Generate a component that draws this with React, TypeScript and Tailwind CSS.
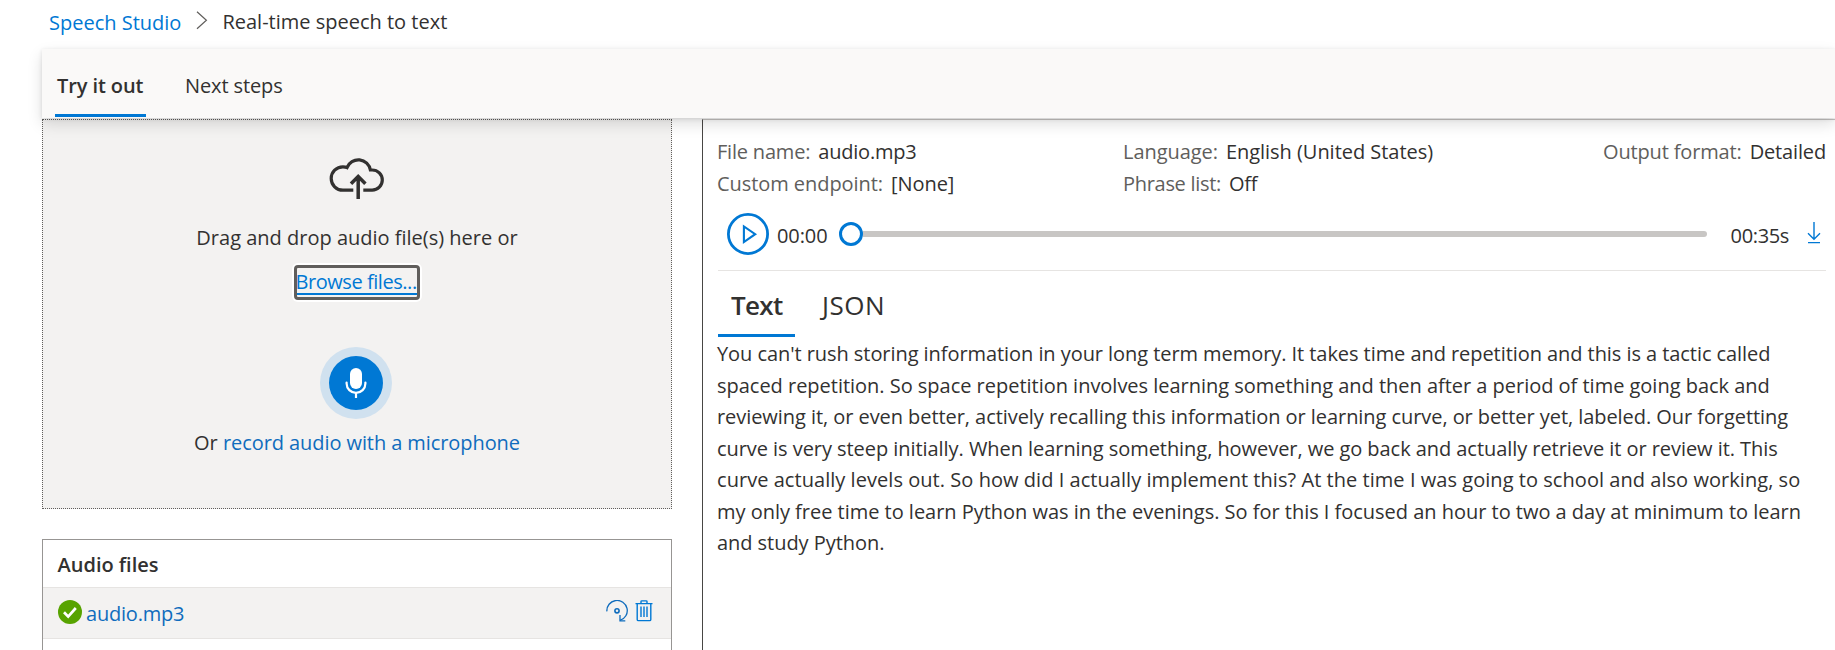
const transcript: { text: string; tracking: string }[] = [
  { text: "You can't rush storing information in your long term memory. It takes time and repetition and this is a tactic called", tracking: "tracking-[-0.062px]" },
  { text: "spaced repetition. So space repetition involves learning something and then after a period of time going back and", tracking: "tracking-[-0.02px]" },
  { text: "reviewing it, or even better, actively recalling this information or learning curve, or better yet, labeled. Our forgetting", tracking: "tracking-[-0.06px]" },
  { text: "curve is very steep initially. When learning something, however, we go back and actually retrieve it or review it. This", tracking: "tracking-[-0.055px]" },
  { text: "curve actually levels out. So how did I actually implement this? At the time I was going to school and also working, so", tracking: "tracking-[0.045px]" },
  { text: "my only free time to learn Python was in the evenings. So for this I focused an hour to two a day at minimum to learn", tracking: "tracking-[-0.022px]" },
  { text: "and study Python.", tracking: "tracking-[-0.05px]" },
];

function Field({ label, value, labelClass, valueClass }: { label: string; value: string; labelClass: string; valueClass: string }) {
  return (
    <div className="flex gap-[8px]">
      <span className={`text-[#605e5c] ${labelClass}`}>{label}</span>
      <span className={valueClass}>{value}</span>
    </div>
  );
}

function CloudUploadIcon() {
  return (
    <svg width="64" height="56" viewBox="0 0 64 56" fill="none" stroke="#323130" strokeWidth="3.2">
      <path d="M28.3 40.2H17.9A11.7 11.7 0 0 1 17.9 16.8C19.5 16.8 20.8 17 22 17.6A12.2 12.2 0 0 1 45.4 20H47.2A10.1 10.1 0 0 1 47.2 40.2H38.3" />
      <path d="M33.2 49V26.5M26 33.8L33.2 26.5L40.4 33.8" strokeWidth="3.5" />
    </svg>
  );
}

function MicIcon() {
  return (
    <svg width="24" height="32" viewBox="0 0 24 32" fill="none" stroke="white" strokeWidth="2.2">
      <rect x="6" y="1" width="12" height="21" rx="6" fill="white" stroke="none" />
      <path d="M2.6 15.5V16.5A9.4 9.4 0 0 0 21.4 16.5V15.5" strokeLinecap="round" />
      <path d="M12 25.5V31" />
    </svg>
  );
}

function RedoIcon() {
  return (
    <svg width="22" height="22" viewBox="0 0 22 22" fill="none" stroke="#0f6cbd" strokeWidth="1.3">
      <path d="M0.9 11.4A10.2 10.2 0 1 1 14 20.4" />
      <path d="M14 15V20.8H19.3" />
      <circle cx="11" cy="10.8" r="2.1" strokeWidth="1.6" />
    </svg>
  );
}

function TrashIcon() {
  return (
    <svg width="18" height="22" viewBox="0 0 18 22" fill="none" stroke="#0078d4" strokeWidth="1.4">
      <path d="M0.5 3.6H17.5M6 3.4V1.6Q6 0.9 6.8 0.9H11.2Q12 0.9 12 1.6V3.4" />
      <path d="M2.2 3.6V19.4Q2.2 20.6 3.4 20.6H14.6Q15.8 20.6 15.8 19.4V3.6" />
      <path d="M6 6.5V17M9 6.5V17M12 6.5V17" />
    </svg>
  );
}

export default function App() {
  return (
    <div className="flex h-[650px] w-[1835px] flex-col overflow-hidden bg-white font-['Open_Sans','Noto_Sans',sans-serif] text-[20px] leading-[32px] whitespace-nowrap text-[#323130]">
      <nav className="flex h-[49px] shrink-0 items-start pl-[49px]">
        <a className="mt-[7px] text-[#0078d4]">Speech Studio</a>
        <svg className="mt-[11px] ml-[15px]" width="12" height="19" viewBox="0 0 12 19" fill="none" stroke="#605e5c" strokeWidth="1.2">
          <path d="M1 0.8L10.4 9.3L1 17.8" />
        </svg>
        <span className="mt-[6px] ml-[14px]">Real-time speech to text</span>
      </nav>

      <div className="relative z-10 ml-[42px] flex h-[69px] shrink-0 bg-[#faf9f8] shadow-[0_6px_14px_rgba(0,0,0,0.13),0_1px_4px_rgba(0,0,0,0.11)]">
        <div className="ml-[13px] h-[68px] w-[91px] border-b-[3px] border-[#0078d4] pt-[21px] pl-[2px] font-semibold tracking-[-0.1px]">Try it out</div>
        <div className="ml-[39px] pt-[21px] tracking-[-0.12px]">Next steps</div>
      </div>

      <main className="mt-px flex min-h-0 flex-1">
        <section className="ml-[42px] flex w-[630px] shrink-0 flex-col">
          <div className="flex h-[390px] shrink-0 flex-col items-center border border-dotted border-[#605e5c] bg-[#f3f2f1]">
            <div className="mt-[30px] mr-[1px]">
              <CloudUploadIcon />
            </div>
            <div className="mt-[16px]">Drag and drop audio file(s) here or</div>
            <button className="mt-[9px] mr-[1px] flex h-[39px] items-start rounded-[6px] bg-white p-[2px]">
              <span className="flex h-[35px] items-start overflow-hidden rounded-[4px] border-[3px] border-[#605e5c] bg-[#f3f2f1]">
                <span className="-mt-[2px] h-[29px] w-[120px] border-b-[2px] border-[#0078d4] leading-[32px] tracking-[-0.45px] text-[#0078d4]">
                  <span className="-ml-px">Browse files...</span>
                </span>
              </span>
            </button>
            <div className="mt-[45px] mr-[2px] flex size-[72px] items-center justify-center rounded-full bg-[#d0e1ef]">
              <div className="flex size-[54px] items-center justify-center rounded-full bg-[#0078d4]">
                <MicIcon />
              </div>
            </div>
            <div className="mt-[8px]">
              Or <a className="tracking-[-0.08px] text-[#0f6cbd]">record audio with a microphone</a>
            </div>
          </div>

          <div className="mt-[30px] flex-1 border border-b-0 border-[#979593]">
            <div className="flex h-[47px] items-center pl-[14.5px] font-semibold">
              <span className="pt-[2px]">Audio files</span>
            </div>
            <div className="flex h-[52px] items-center border-y border-[#e6e4e2] bg-[#f3f2f1] pr-[18px] pl-[15px]">
              <svg className="-mt-[2px]" width="24" height="24" viewBox="0 0 24 24" fill="none">
                <circle cx="12" cy="12" r="12" fill="#57a300" />
                <path d="M6 12.2L10.2 16.6L17.8 8" stroke="white" strokeWidth="2.7" />
              </svg>
              <a className="ml-[4px] pt-px tracking-[-0.2px] text-[#0f6cbd]">audio.mp3</a>
              <div className="-mt-[4px] ml-auto flex gap-[7px]">
                <RedoIcon />
                <TrashIcon />
              </div>
            </div>
          </div>
        </section>

        <section className="ml-[30px] flex flex-1 flex-col border-t border-l border-t-[#c8c6c4] border-l-[#484644] pr-[9px] pl-[15px]">
          <div className="-ml-px mt-[16px] flex">
            <div className="w-[406px]">
              <Field label="File name:" value="audio.mp3" labelClass="tracking-[-0.2px]" valueClass="tracking-[-0.2px]" />
              <Field label="Custom endpoint:" value="[None]" labelClass="tracking-[-0.06px]" valueClass="tracking-[-0.06px]" />
            </div>
            <div>
              <Field label="Language:" value="English (United States)" labelClass="tracking-[-0.06px]" valueClass="tracking-[-0.03px]" />
              <Field label="Phrase list:" value="Off" labelClass="tracking-[-0.3px]" valueClass="tracking-[-0.2px]" />
            </div>
            <div className="ml-auto">
              <Field label="Output format:" value="Detailed" labelClass="tracking-[-0.15px]" valueClass="tracking-[-0.15px]" />
            </div>
          </div>

          <div className="flex h-[71px] shrink-0 items-center border-b border-[#e6e4e2] pb-[2px] pl-[9px]">
            <svg width="42" height="42" viewBox="0 0 42 42" fill="none" stroke="#0078d4">
              <circle cx="21" cy="21" r="19.6" strokeWidth="2.8" />
              <path d="M16.9 13.4V29L28.2 21.2Z" strokeWidth="2.1" />
            </svg>
            <span className="ml-[8px] w-[52px] pt-[3px] tracking-[-0.1px]">00:00</span>
            <div className="ml-[10px] flex flex-1 items-center">
              <span className="size-[24px] rounded-full border-[3px] border-[#0078d4] bg-white" />
              <span className="h-[6px] flex-1 rounded-r-full bg-[#c8c6c4]" />
            </div>
            <span className="ml-[24px] pt-[3px] tracking-[-0.35px]">00:35s</span>
            <svg className="mr-[5px] ml-[18px] -mt-[3px]" width="14" height="22" viewBox="0 0 14 22" fill="none" stroke="#0078d4" strokeWidth="1.4">
              <path d="M7 0V17M1 11.2L7 17.2L13 11.2M1 20.6H13" />
            </svg>
          </div>

          <div className="flex h-[66px] shrink-0 text-[26px] leading-[36px]">
            <div className="w-[77px] border-b-[3px] border-[#0078d4] pt-[16px] pl-[13px] font-semibold tracking-[-0.7px]">Text</div>
            <div className="ml-[27px] pt-[16px] tracking-[0.5px]">JSON</div>
          </div>

          <div className="-ml-px pt-px leading-[31.5px]">
            {transcript.map((line) => (
              <div key={line.text} className={line.tracking}>
                {line.text}
              </div>
            ))}
          </div>
        </section>
      </main>
    </div>
  );
}
